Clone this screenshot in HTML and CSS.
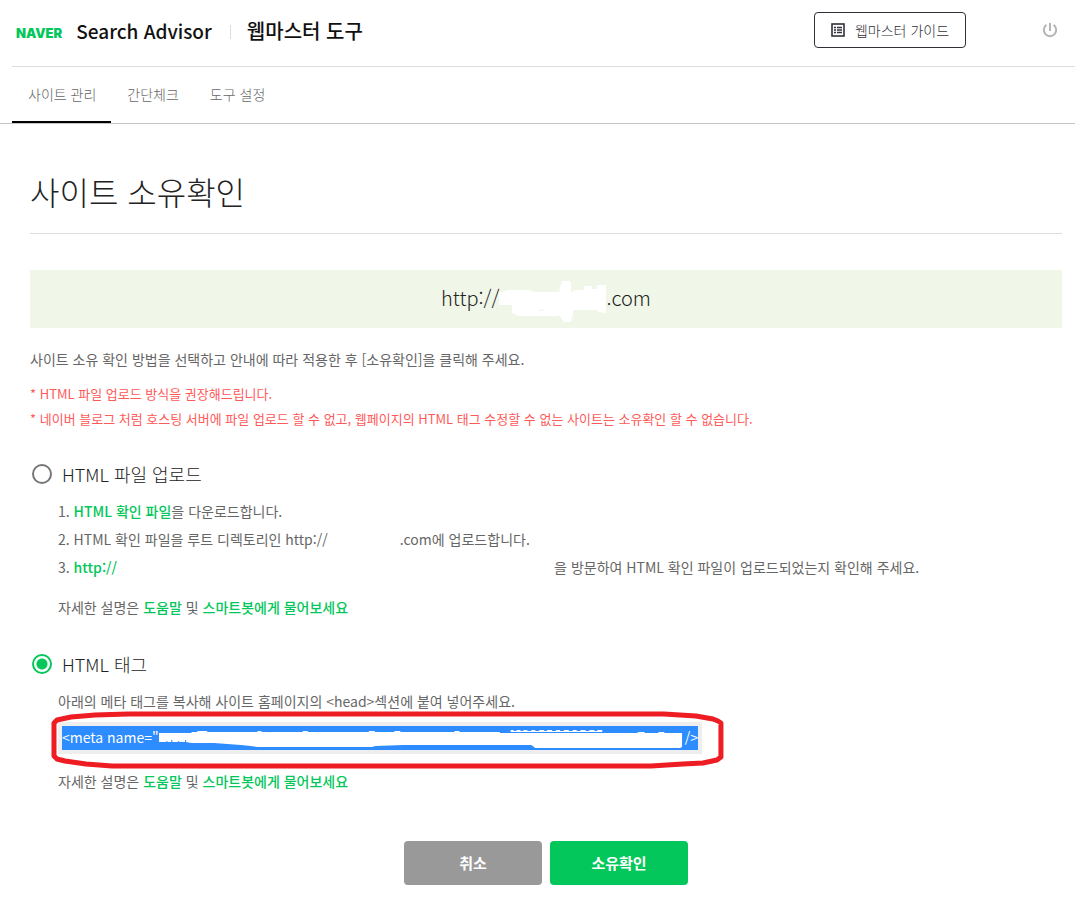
FILE: index.html
```html
<!DOCTYPE html>
<html lang="ko">
<head>
  <meta charset="UTF-8">
  <meta name="viewport" content="width=device-width, initial-scale=1.0">
  <title>네이버 서치어드바이저 - 웹마스터 도구</title>
  <link rel="stylesheet" href="styles.css">
</head>
<body>
  <header class="header">
    <a class="naver" href="#">NAVER</a>
    <a class="brand" href="#">Search Advisor</a>
    <span class="divider"></span>
    <a class="tool-name" href="#">웹마스터 도구</a>
    <button class="guide-btn" type="button">
      <svg width="14" height="14" viewBox="0 0 14 14" fill="none" stroke="#303038">
        <rect x="1" y="1" width="12" height="12" stroke-width="1.6"/>
        <path d="M3 4.5h2M3 7h2M3 9.5h2M6 4.5h5M6 7h5M6 9.5h5" stroke-width="1.3"/>
      </svg>
      웹마스터 가이드
    </button>
    <button class="power-btn" type="button" aria-label="로그아웃">
      <svg width="16" height="16" viewBox="0 0 16 16" fill="none" stroke="#b5b5b5" stroke-width="2">
        <path d="M8 1v8M4.4 2.9a6.2 6.2 0 1 0 7.2 0"/>
      </svg>
    </button>
  </header>

  <nav class="tabs">
    <a class="tab active" href="#">사이트 관리</a>
    <a class="tab" href="#">간단체크</a>
    <a class="tab" href="#">도구 설정</a>
  </nav>

  <main class="content">
    <h1>사이트 소유확인</h1>

    <div class="site-url">
      <span>http://</span>
      <svg class="url-mask" width="107" height="46" viewBox="0 0 107 46" fill="#fff">
        <path d="M0 12h4l4-2h22l5 2h25l2-8 1-3h8l1 3v8l5-2h8V6h8v3h5V5h9v28l-8-1v-2H74v4l-2 8h-7l-5-7-2 1H19l-6-3v-8H0z"/>
        <path d="M39 31l4-2 3 0-3 2z" fill="#f0f6e8"/>
      </svg>
      <span>.com</span>
    </div>

    <p class="desc">사이트 소유 확인 방법을 선택하고 안내에 따라 적용한 후 [소유확인]을 클릭해 주세요.</p>
    <p class="notice">* HTML 파일 업로드 방식을 권장해드립니다.</p>
    <p class="notice">* 네이버 블로그 처럼 호스팅 서버에 파일 업로드 할 수 없고, 웹페이지의 HTML 태그 수정할 수 없는 사이트는 소유확인 할 수 없습니다.</p>

    <form>
      <section class="method">
        <label class="method-title"><input type="radio" name="method" value="file">HTML 파일 업로드</label>
        <div class="method-body">
          <ol class="steps">
            <li><a href="#">HTML 확인 파일</a>을 다운로드합니다.</li>
            <li>HTML 확인 파일을 루트 디렉토리인 http://<span class="blank-domain"></span>.com에 업로드합니다.</li>
            <li><a href="#">http://<span class="blank-url"></span></a>을 방문하여 HTML 확인 파일이 업로드되었는지 확인해 주세요.</li>
          </ol>
          <p class="help">자세한 설명은 <a href="#">도움말</a> 및 <a href="#">스마트봇에게 물어보세요</a></p>
        </div>
      </section>

      <section class="method">
        <label class="method-title"><input type="radio" name="method" value="tag" checked>HTML 태그</label>
        <div class="method-body">
          <p class="tag-desc">아래의 메타 태그를 복사해 사이트 홈페이지의 &lt;head&gt;섹션에 붙여 넣어주세요.</p>
          <div class="tag-box">
            <code class="tag-code">
              <span>&lt;meta name="</span>
              <svg class="tag-mask" height="24" viewBox="0 0 534 24" preserveAspectRatio="none" fill="#fff">
                <path d="M0 7h33v-1h6V5h10v1h51V5h4v1h42V5h5v1h62V5h6v1h20V5h6v1h55V5h5v1h41v1h140V6h7v1h14V6h6v1h18v14l-2 1H382l-4-3H248l-28 1-4 1H100l-7-1-10-1-27-2H33l-6-1H0z"/>
                <path d="M357 6v-2h3v1h3V4h4v1h3V4h4v1h4V4h4v1h4V4h5v1h3V4h5v1h4V4h4v1h4V4h5v1h4V4h4v1h4V4h5v1h4V4h5v1h3V4h5v2z"/>
                <path d="M8 15v2M13 14v2M20 15v2M27 14v3" stroke="#2d8cff" stroke-width="1"/>
              </svg>
              <span>/&gt;</span>
            </code>
            <svg class="marker" viewBox="0 0 674 58" preserveAspectRatio="none" fill="none" stroke="#ee1c23" stroke-width="5" stroke-linejoin="round">
              <path d="M4 45V12l3-3 14-3 24-2 33-1h536l32 2 17 3 5 2 3 2v34l-4 3-14 3-20 1-32 2H62l-26-2-21-3-8-2z"/>
            </svg>
          </div>
          <p class="tag-help">자세한 설명은 <a href="#">도움말</a> 및 <a href="#">스마트봇에게 물어보세요</a></p>
        </div>
      </section>

      <div class="buttons">
        <button class="btn cancel" type="button">취소</button>
        <button class="btn confirm" type="submit">소유확인</button>
      </div>
    </form>
  </main>
</body>
</html>
```
FILE: styles.css
```css
* {
  box-sizing: border-box;
}
body {
  margin: 0;
  font-family: "Noto Sans CJK KR", sans-serif;
  font-size: 14px;
  font-weight: 400;
  color: #666;
  background: #fff;
}
h1, p, ol {
  margin: 0;
  padding: 0;
}
a {
  color: inherit;
  text-decoration: none;
}
button {
  font-family: inherit;
  cursor: pointer;
}
svg {
  display: block;
}

/* header */
.header {
  display: flex;
  align-items: center;
  height: 67px;
  margin-left: 12px;
  padding: 0 17px 6px 4px;
  border-bottom: 1px solid #ddd;
}
.naver {
  padding-top: 6px;
  font-family: Inter, sans-serif;
  font-size: 13px;
  font-weight: 900;
  color: #03c75a;
}
.brand {
  margin-left: 14px;
  font-size: 19px;
  font-weight: 500;
  color: #111;
}
.divider {
  width: 1px;
  height: 14px;
  margin: 4px 16px 0 18px;
  background: #ddd;
}
.tool-name {
  font-size: 20px;
  font-weight: 500;
  color: #111;
}
.guide-btn {
  display: flex;
  align-items: center;
  justify-content: center;
  gap: 10px;
  width: 152px;
  height: 36px;
  margin-left: auto;
  padding-bottom: 2px;
  border: 1px solid #303038;
  border-radius: 4px;
  background: #fff;
  font-size: 14px;
  font-weight: 300;
  color: #303038;
}
.power-btn {
  margin-left: 76px;
  padding: 0;
  border: 0;
  background: none;
}

/* tabs */
.tabs {
  display: flex;
  height: 57px;
  padding-left: 12px;
  border-bottom: 1px solid #c4c4c4;
}
.tab {
  padding: 0 15px 0 16px;
  font-weight: 300;
  line-height: 54px;
  color: #666;
}
.tab.active {
  border-bottom: 2px solid #000;
}

/* content */
.content {
  padding: 40px 13px 14px 30px;
}
h1 {
  padding-bottom: 14px;
  border-bottom: 1px solid #ddd;
  font-size: 32px;
  font-weight: 300;
  line-height: 55px;
  color: #222;
}
.site-url {
  display: flex;
  align-items: center;
  justify-content: center;
  height: 58px;
  margin-top: 36px;
  padding-bottom: 4px;
  background: #f0f6e8;
  font-size: 20px;
  font-weight: 300;
  color: #222;
}
.url-mask {
  margin-top: 12px;
}
.desc {
  margin: 18px 0 9px;
  line-height: 26px;
}
.notice {
  font-size: 13px;
  line-height: 25px;
  color: #ff5a5a;
}

/* methods */
.method {
  margin-top: 27px;
}
.method-title {
  display: flex;
  align-items: center;
  gap: 10px;
  padding-left: 2px;
  font-size: 18px;
  font-weight: 300;
  line-height: 32px;
  color: #222;
}
.method-title input {
  appearance: none;
  width: 20px;
  height: 20px;
  margin: 0;
  border: 2px solid #777;
  border-radius: 50%;
}
.method-title input:checked {
  border-color: #03c75a;
  background: radial-gradient(circle, #03c75a 5px, #fff 6px);
}
.method-body {
  padding: 7px 0 0 28px;
}
.method-body a {
  font-weight: 500;
  color: #03c75a;
}
.steps {
  list-style: none;
  line-height: 28px;
}
.steps li {
  counter-increment: step;
}
.steps li::before {
  content: counter(step) ". ";
}
.blank-domain,
.blank-url {
  display: inline-block;
  width: 72px;
}
.blank-url {
  width: 437px;
}
.help {
  margin-top: 12px;
  line-height: 28px;
}
.tag-desc {
  line-height: 28px;
}
.tag-box {
  position: relative;
  width: fit-content;
  margin-top: 7px;
  padding: 4px;
  background: #eee;
}
.tag-code {
  display: flex;
  height: 24px;
  background: #2d8cff;
  font-family: inherit;
  line-height: 23px;
  color: #fff;
}
.tag-mask {
  width: 526px;
}
/* hand-drawn marker around the tag */
.marker {
  position: absolute;
  top: -11px;
  left: -8px;
  width: calc(100% + 30px);
  height: 58px;
}
.tag-help {
  margin-top: 13px;
  line-height: 28px;
}

/* buttons */
.buttons {
  display: flex;
  justify-content: center;
  gap: 8px;
  margin-top: 46px;
}
.btn {
  width: 138px;
  height: 44px;
  padding: 0 0 2px;
  border: 0;
  border-radius: 4px;
  font-size: 15px;
  font-weight: 700;
  color: #fff;
}
.cancel {
  background: #999;
}
.confirm {
  background: #03c75a;
}
```
